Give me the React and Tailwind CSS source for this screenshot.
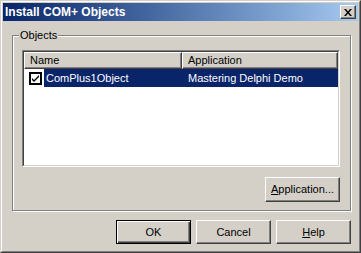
const raised =
  "border border-t-white border-l-white border-r-[#404040] border-b-[#404040] shadow-[inset_-1px_-1px_0_#808080]";

const Btn = ({ children, def, className = "" }) => (
  <div
    className={
      "flex items-center justify-center bg-[#d4d0c8] text-[11px] text-black " +
      (def
        ? "border border-black shadow-[inset_1px_1px_0_#fff,inset_-1px_-1px_0_#404040,inset_-2px_-2px_0_#808080] "
        : raised + " ") +
      className
    }
  >
    {children}
  </div>
);

const App = () => {
  return (
    <div
      className="w-[361px] h-[253px] bg-[#d4d0c8] border border-t-[#d4d0c8] border-l-[#d4d0c8] border-r-[#404040] border-b-[#404040] overflow-hidden"
      style={{ fontFamily: '"Liberation Sans", Arial, sans-serif' }}
    >
      <div className="h-full border border-t-white border-l-white border-r-[#808080] border-b-[#808080] p-px flex flex-col">
        {/* title bar */}
        <div className="h-[18px] flex items-center justify-between bg-gradient-to-r from-[#0a246a] to-[#a6caf0] pl-[2px] pr-[2px]">
          <span className="text-white font-bold text-[12px] leading-none">Install COM+ Objects</span>
          <div className={"w-[16px] h-[14px] bg-[#d4d0c8] flex items-center justify-center " + raised}>
            <svg width="8" height="7" viewBox="0 0 8 7">
              <path d="M0 0h2l2 2.5L6 0h2L5 3.5 8 7H6L4 4.5 2 7H0l3-3.5z" fill="#000" />
            </svg>
          </div>
        </div>

        {/* body */}
        <div className="flex-1 flex flex-col pl-[9px] pr-[7px] pt-[14px]">
          <div className="relative h-[176px] border border-[#808080] shadow-[1px_1px_0_#fff,inset_1px_1px_0_#fff] pl-[9px] pr-[10px] pt-[14px] flex flex-col">
            <span className="absolute left-[6px] -top-[8px] bg-[#d4d0c8] px-[1px] text-[11px] leading-[14px] text-black">
              Objects
            </span>

            {/* list view */}
            <div className="w-[318px] h-[117px] border border-t-[#808080] border-l-[#808080] border-r-white border-b-white">
              <div className="h-full border border-t-[#404040] border-l-[#404040] border-r-[#d4d0c8] border-b-[#d4d0c8] bg-white flex flex-col">
                <div className="flex h-[17px] text-[11px] text-black">
                  <div className={"w-[158px] h-full flex items-center pl-[5px] bg-[#d4d0c8] " + raised}>Name</div>
                  <div className={"flex-1 h-full flex items-center pl-[5px] bg-[#d4d0c8] " + raised}>Application</div>
                </div>
                <div className="flex items-center h-[18px] text-[11px]">
                  <div className="w-[20px] h-full flex items-center justify-center pl-[2px]">
                    <div className="w-[13px] h-[13px] border-2 border-black bg-white flex items-center justify-center">
                      <svg width="9" height="9" viewBox="0 0 9 9">
                        <path d="M1 4l2 2 5-5v2L3 8 1 6z" fill="#000" />
                      </svg>
                    </div>
                  </div>
                  <div className="flex-1 h-full flex bg-[#0a246a] text-white">
                    <div className="w-[138px] flex items-center pl-[2px]">ComPlus1Object</div>
                    <div className="flex-1 flex items-center pl-[6px]">Mastering Delphi Demo</div>
                  </div>
                </div>
              </div>
            </div>

            <div className="flex justify-end w-[318px] mt-[10px]">
              <Btn className="w-[75px] h-[25px]">
                <span><span className="underline">A</span>pplication...</span>
              </Btn>
            </div>
          </div>

          {/* footer */}
          <div className="flex justify-end gap-[5px] mt-[9px]">
            <Btn def className="w-[75px] h-[24px]">OK</Btn>
            <Btn className="w-[75px] h-[24px]">Cancel</Btn>
            <Btn className="w-[75px] h-[24px]">
              <span><span className="underline">H</span>elp</span>
            </Btn>
          </div>
        </div>
      </div>
    </div>
  );
};

export default App;
